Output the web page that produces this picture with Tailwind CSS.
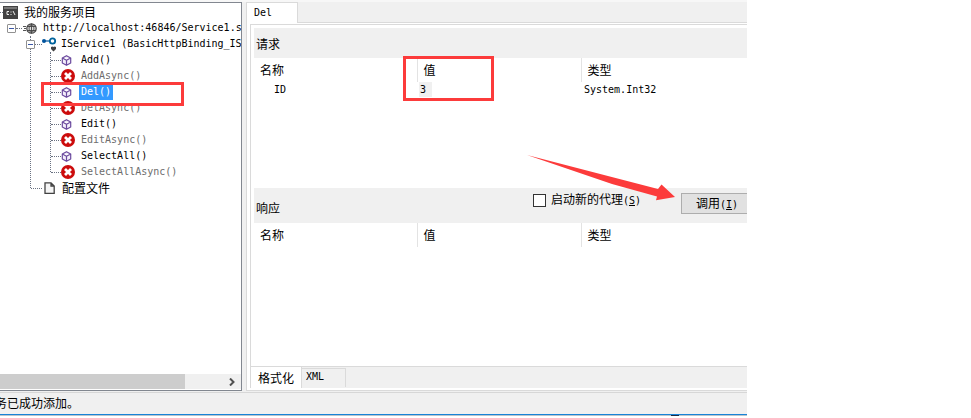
<!DOCTYPE html>
<html lang="zh-CN">

<head>
    <meta charset="utf-8" />
    <meta name="viewport" content="width=device-width,initial-scale=1" />
    <title>WCF 测试客户端</title>
    <script src="https://cdn.jsdelivr.net/npm/@tailwindcss/browser@4"></script>
</head>

<body class="bg-white text-black text-xs leading-4 font-['Noto_Sans_CJK_SC',sans-serif]">
    <!-- shared icons -->
    <svg class="hidden">
        <symbol id="method" viewBox="0 0 10 11">
            <path d="M5 .7 9.2 3v5L5 10.3.8 8V3Z M.8 3 5 5.3 9.2 3 M5 5.3v5" fill="#f3eefa" stroke="#6b4a9e" stroke-width="1.2" stroke-linejoin="round" />
        </symbol>
        <symbol id="error" viewBox="0 0 14 14">
            <circle cx="7" cy="7" r="7" fill="#cc0c0c" />
            <path d="M4 4l6 6M10 4l-6 6" stroke="#fff" stroke-width="2.8" />
        </symbol>
    </svg>

    <div class="relative w-full max-w-[747px] overflow-hidden bg-[#f0f0f0]">
        <div class="h-[2px] bg-[#f7f7f7]"></div>
        <div class="flex">
            <!-- service tree -->
            <aside class="w-[242px] shrink-0 flex flex-col justify-between overflow-hidden border-t border-r border-b border-[#828790] bg-white">
                <div class="pt-px whitespace-nowrap">
                    <div class="flex items-center h-4">
                        <span class="w-[3px] border-t border-dotted border-gray-500"></span>
                        <svg class="w-[15px] h-[13px] mr-[6px] shrink-0" viewBox="0 0 15 13">
                            <path d="M0 0h15v13H0Z" fill="#424242" />
                            <path d="M1 2h13" stroke="#aaa" />
                            <path d="M6 5.5H4v3h2M8 5.5v1M8 8v1M10 5l2 4" fill="none" stroke="#eee" />
                        </svg>
                        <span>我的服务项目</span>
                    </div>
                    <div class="flex items-center h-4 pl-[7px]">
                        <button class="w-[9px] h-[9px] shrink-0 flex items-center justify-center border border-[#919191] rounded-[1px] bg-white" aria-label="折叠服务"><span class="w-[5px] h-px bg-[#3b58a8]"></span></button>
                        <span class="w-[6px] shrink-0 border-t border-dotted border-gray-500"></span>
                        <svg class="w-[15px] h-[11px] mr-[6px] shrink-0" viewBox="0 0 15 11">
                            <path d="M1 3.5h3M2 5.5h2M1 7.5h3" stroke="#555" />
                            <circle cx="9.5" cy="5.5" r="4.7" fill="#ddd" stroke="#424242" stroke-width="1.2" />
                            <path d="M5 3.5h9M5 7.5h9M9.5 1v9M9.5 1c-3.2 2.5-3.2 6.5 0 9M9.5 1c3.2 2.5 3.2 6.5 0 9" fill="none" stroke="#424242" stroke-width=".9" />
                        </svg>
                        <span class="text-[10px] font-['DejaVu_Sans_Mono',monospace]">http://localhost:46846/Service1.s</span>
                    </div>
                    <div class="flex pl-[30px]">
                        <span class="w-px mb-2 border-l border-dotted border-gray-500"></span>
                        <ul class="-ml-[5px]">
                            <li>
                                <div class="flex items-center h-4">
                                    <button class="w-[9px] h-[9px] shrink-0 flex items-center justify-center border border-[#919191] rounded-[1px] bg-white" aria-label="折叠接口"><span class="w-[5px] h-px bg-[#3b58a8]"></span></button>
                                    <span class="w-[7px] shrink-0 border-t border-dotted border-gray-500"></span>
                                    <svg class="w-[15px] h-4 mr-1 shrink-0" viewBox="0 0 15 16">
                                        <path d="M2 5h6" stroke="#00539c" stroke-width="1.2" />
                                        <circle cx="2" cy="5" r="2" fill="#00539c" />
                                        <circle cx="10.5" cy="5" r="2.7" fill="#fff" stroke="#00639c" stroke-width="1.8" />
                                        <path d="M9 11q1.500-1 2.500 0 1-1 2.500 0v2l-2.500 2.500L9 13Z" fill="#424242" />
                                    </svg>
                                    <span class="text-[10px] font-['DejaVu_Sans_Mono',monospace]">IService1 (BasicHttpBinding_IS</span>
                                </div>
                                <div class="flex pl-[24px]">
                                    <span class="w-px mb-2 border-l border-dotted border-gray-500"></span>
                                    <ul class="text-[10px] font-['DejaVu_Sans_Mono',monospace]">
                                        <li class="flex items-center h-4">
                                            <span class="w-[10px] border-t border-dotted border-gray-500"></span>
                                            <span class="w-5"><svg class="w-[11px] h-[11px]"><use href="#method" /></svg></span>
                                            <span>Add()</span>
                                        </li>
                                        <li class="flex items-center h-4">
                                            <span class="w-[10px] border-t border-dotted border-gray-500"></span>
                                            <span class="w-5"><svg class="w-[14px] h-[14px]"><use href="#error" /></svg></span>
                                            <span class="text-[#6d6d6d]">AddAsync()</span>
                                        </li>
                                        <li class="flex items-center h-4">
                                            <span class="w-[10px] border-t border-dotted border-gray-500"></span>
                                            <span class="w-[18px]"><svg class="w-[11px] h-[11px]"><use href="#method" /></svg></span>
                                            <span class="px-[2px] bg-[#3399ff] text-white">Del()</span>
                                        </li>
                                        <li class="flex items-center h-4">
                                            <span class="w-[10px] border-t border-dotted border-gray-500"></span>
                                            <span class="w-5"><svg class="w-[14px] h-[14px]"><use href="#error" /></svg></span>
                                            <span class="text-[#6d6d6d]">DelAsync()</span>
                                        </li>
                                        <li class="flex items-center h-4">
                                            <span class="w-[10px] border-t border-dotted border-gray-500"></span>
                                            <span class="w-5"><svg class="w-[11px] h-[11px]"><use href="#method" /></svg></span>
                                            <span>Edit()</span>
                                        </li>
                                        <li class="flex items-center h-4">
                                            <span class="w-[10px] border-t border-dotted border-gray-500"></span>
                                            <span class="w-5"><svg class="w-[14px] h-[14px]"><use href="#error" /></svg></span>
                                            <span class="text-[#6d6d6d]">EditAsync()</span>
                                        </li>
                                        <li class="flex items-center h-4">
                                            <span class="w-[10px] border-t border-dotted border-gray-500"></span>
                                            <span class="w-5"><svg class="w-[11px] h-[11px]"><use href="#method" /></svg></span>
                                            <span>SelectAll()</span>
                                        </li>
                                        <li class="flex items-center h-4">
                                            <span class="w-[10px] border-t border-dotted border-gray-500"></span>
                                            <span class="w-5"><svg class="w-[14px] h-[14px]"><use href="#error" /></svg></span>
                                            <span class="text-[#6d6d6d]">SelectAllAsync()</span>
                                        </li>
                                    </ul>
                                </div>
                            </li>
                            <li class="flex items-center h-4 pl-[5px]">
                                <span class="w-[11px] mr-[2px] border-t border-dotted border-gray-500"></span>
                                <svg class="w-[11px] h-3 mr-[7px]" viewBox="0 0 11 12">
                                    <path d="M1 .8h6L10.2 4v7.3H1Z M7 .8V4h3.2" fill="#f5f5f5" stroke="#424242" stroke-width="1.3" />
                                </svg>
                                <span>配置文件</span>
                            </li>
                        </ul>
                    </div>
                </div>
                <div class="flex items-center justify-between h-[15px] mb-px pr-[6px] bg-[#f0f0f0]">
                    <div class="w-[185px] h-full bg-[#cdcdcd]"></div>
                    <svg class="w-[6px] h-2" viewBox="0 0 6 8"><path d="M1 .5 4.5 4 1 7.5" fill="none" stroke="#505050" stroke-width="2" /></svg>
                </div>
            </aside>

            <!-- method panel -->
            <main class="flex-1 min-w-0 ml-1 border-l border-b border-[#dadada] bg-white">
                <div class="flex h-[21px] bg-[#f0f0f0]">
                    <button class="w-[51px] pl-[7px] text-left border-t border-r border-[#dadada] bg-white text-[10px] leading-4 font-['DejaVu_Sans_Mono',monospace]">Del</button>
                    <div class="flex-1 border-b border-[#dadada]"></div>
                </div>
                <div class="mt-px ml-[3px] mb-[2px] border-l border-t border-[#dadada]">
                    <div class="pl-[3px] pt-[3px]">
                        <h2 class="h-[30px] pl-[2px] pt-2 bg-[#f0f0f0]">请求</h2>
                        <div class="h-[130px]">
                            <table class="w-full table-fixed text-left">
                                <thead>
                                    <tr class="h-6">
                                        <th class="w-[163px] pl-[6px] font-normal border-r border-[#e3e3e3]">名称</th>
                                        <th class="w-[164px] pl-[6px] font-normal border-r border-[#e3e3e3]">值</th>
                                        <th class="pl-[6px] font-normal">类型</th>
                                    </tr>
                                </thead>
                                <tbody class="text-[10px] leading-[15px] font-['DejaVu_Sans_Mono',monospace]">
                                    <tr>
                                        <td class="pl-5">ID</td>
                                        <td class="pl-[2px]"><input class="block w-[13px] h-[15px] pl-px bg-[#f0f0f0]" value="3" aria-label="ID 的值" /></td>
                                        <td class="pl-[3px]">System.Int32</td>
                                    </tr>
                                </tbody>
                            </table>
                        </div>
                        <div class="flex justify-between h-[35px] bg-[#f0f0f0]">
                            <h2 class="pl-[2px] pt-3">响应</h2>
                            <div class="flex items-start">
                                <label class="flex items-center pt-[3px] mr-10">
                                    <input type="checkbox" class="appearance-none w-[13px] h-[13px] mr-[5px] mt-px border border-[#333] bg-white" />
                                    <span>启动新的代理<span class="text-[10px] font-['DejaVu_Sans_Mono',monospace]">(<u>S</u>)</span></span>
                                </label>
                                <button class="w-[66px] h-[21px] mt-[5px] pl-[14px] text-left whitespace-nowrap border border-r-0 border-[#adadad] bg-[#e1e1e1]">调用<span class="text-[10px] font-['DejaVu_Sans_Mono',monospace]">(<u>I</u>)</span></button>
                            </div>
                        </div>
                        <div class="h-[143px]">
                            <table class="w-full table-fixed text-left">
                                <thead>
                                    <tr class="h-6">
                                        <th class="w-[163px] pl-[6px] font-normal border-r border-[#e3e3e3]">名称</th>
                                        <th class="w-[164px] pl-[6px] font-normal border-r border-[#e3e3e3]">值</th>
                                        <th class="pl-[6px] font-normal">类型</th>
                                    </tr>
                                </thead>
                            </table>
                        </div>
                    </div>
                    <div class="flex items-start h-[22px] border-t border-[#dadada] bg-[#f0f0f0]">
                        <button class="w-[51px] h-[21px] pl-[7px] text-left border-r border-[#dadada] bg-white">格式化</button>
                        <button class="w-11 h-[19px] mt-px pl-1 pb-[2px] text-left leading-4 border-t border-r border-[#dadada] text-[10px] font-['DejaVu_Sans_Mono',monospace]">XML</button>
                    </div>
                </div>
            </main>
        </div>

        <footer class="mt-px h-[22px] pt-[2px] border-t border-[#d7d7d7] overflow-hidden">
            <p class="-ml-[5px]">务已成功添加。</p>
        </footer>
        <div class="h-px bg-[#1883d7]"></div>
        <div class="flex h-px bg-[#b8c4ce]"><span class="w-2 ml-[671px] bg-[#1c2b45]"></span></div>

        <!-- red annotations -->
        <div class="absolute left-[41px] top-[82px] w-[143px] h-6 border-3 border-[#fc3b3b]"></div>
        <div class="absolute left-[403px] top-14 w-[91px] h-[45px] border-3 border-[#fc3b3b]"></div>
        <svg class="absolute left-[527px] top-[155px] w-[148px] h-[46px]" viewBox="0 0 148 46">
            <path d="M0 0 131 34 134.5 29.5 148 42 129 45.3 130 41.5 85 29Z" fill="#fc3b3b" />
        </svg>
    </div>
</body>

</html>
